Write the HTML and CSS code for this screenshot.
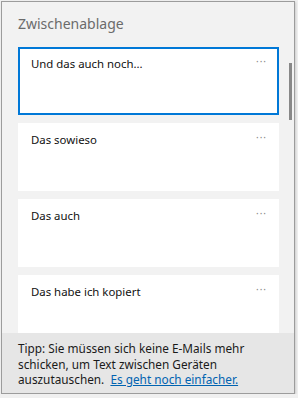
FILE: index.html
```html
<!DOCTYPE html>
<html lang="de">
<head>
  <meta charset="UTF-8">
  <meta name="viewport" content="width=device-width, initial-scale=1.0">
  <title>Zwischenablage</title>
  <link rel="stylesheet" href="styles.css">
</head>
<body>
  <div id="panel">
    <div id="header">
      <h2>Zwischenablage</h2>
    </div>

    <div id="clipList">
      <!-- Clipboard items -->
      <div class="clipCard selected">
        <p>Und das auch noch...</p>
        <span class="more">&middot;&middot;&middot;</span>
      </div>
      <div class="clipCard">
        <p>Das sowieso</p>
        <span class="more">&middot;&middot;&middot;</span>
      </div>
      <div class="clipCard">
        <p>Das auch</p>
        <span class="more">&middot;&middot;&middot;</span>
      </div>
      <div class="clipCard">
        <p>Das habe ich kopiert</p>
        <span class="more">&middot;&middot;&middot;</span>
      </div>
      <div class="scrollThumb"></div>
    </div>

    <div id="footer">
      Tipp: Sie müssen sich keine E-Mails mehr schicken, um Text zwischen Geräten auszutauschen.&nbsp;
      <a href="#">Es geht noch einfacher.</a>
    </div>
  </div>
</body>
</html>
```

FILE: styles.css
```css
body {
  margin: 0;
  padding: 0;
  background-color: #f0f0f0;
  font-family: "Noto Sans", sans-serif;
}
#panel {
  margin: 1px 0 0 1px;
  width: 294px;
  height: 393px;
  box-sizing: border-box;
  border: 1px solid #9c9c9c;
  background-color: #f2f2f2;
  display: flex;
  flex-direction: column;
  box-shadow: 1px 1px 2px rgba(0, 0, 0, 0.15);
}
#header {
  height: 45px;
  padding: 12px 0 0 16px;
  box-sizing: border-box;
}
#header h2 {
  margin: 0;
  font-size: 14px;
  line-height: 20px;
  font-weight: normal;
  color: #6b6b6b;
}
#clipList {
  flex: 1;
  overflow: hidden;
  position: relative;
  padding: 0 15px 0 16px;
  display: flex;
  flex-direction: column;
  gap: 8px;
}
.clipCard {
  flex: none;
  height: 68px;
  box-sizing: border-box;
  background-color: #fff;
  padding: 9px 12px 0 13px;
  display: flex;
  justify-content: space-between;
  align-items: flex-start;
}
.clipCard.selected {
  border: 2px solid #0078d7;
  padding: 7px 10px 0 11px;
}
.clipCard p {
  margin: 0;
  font-size: 11.4px;
  line-height: 16px;
  color: #111;
}
.more {
  font-size: 10px;
  line-height: 10px;
  letter-spacing: 1px;
  color: #8a8a8a;
}
.scrollThumb {
  position: absolute;
  top: 16px;
  right: 2px;
  width: 3px;
  height: 57px;
  background-color: #888;
}
#footer {
  flex: none;
  height: 60px;
  box-sizing: border-box;
  background-color: #e6e6e6;
  padding: 8px 38px 0 16px;
  font-size: 11.8px;
  line-height: 15.5px;
  color: #1a1a1a;
}
#footer a {
  color: #0063b1;
}
```
